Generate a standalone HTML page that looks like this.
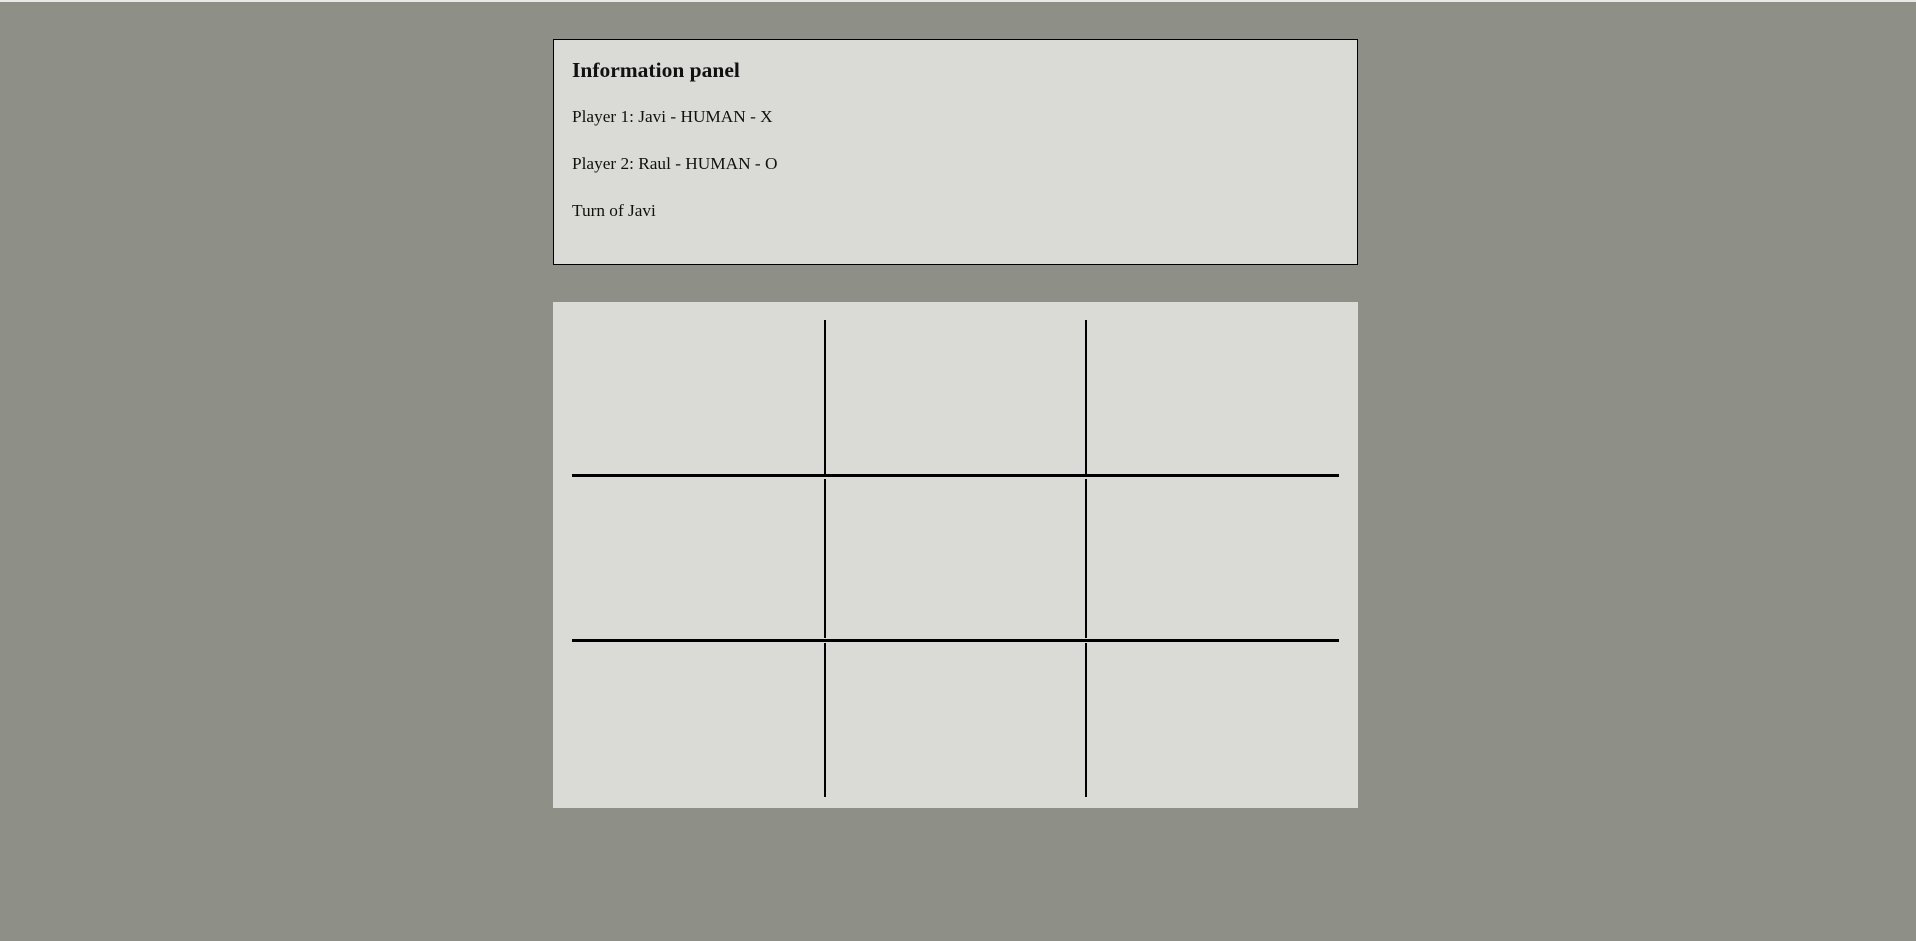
<!DOCTYPE html>
<html><head><style>
body{margin:0;width:1916px;height:941px;background:#8e8f87;position:relative;overflow:hidden;font-family:"Liberation Serif",serif;color:#111;border-top:2px solid #e8e8e6;box-sizing:border-box}
.p{position:absolute;left:553px;top:37px;width:805px;height:226px;box-sizing:border-box;border:1px solid #000;background:#dadad6}
.t{position:absolute;left:572px;white-space:nowrap}
.b{position:absolute;left:553px;top:300px;width:805px;height:506px;background:#dadad6}
.h{position:absolute;left:572px;width:767px;height:3px;background:#000}
.v{position:absolute;width:2px;background:#000}
</style></head><body>
<div class="p"></div>
<div class="t" style="top:56px;font-size:21.5px;font-weight:bold">Information panel</div>
<div class="t" style="top:105px;font-size:17.3px">Player 1: Javi - HUMAN - X</div>
<div class="t" style="top:152px;font-size:17.3px">Player 2: Raul - HUMAN - O</div>
<div class="t" style="top:199px;font-size:17.3px">Turn of Javi</div>
<div class="b"></div>
<div class="h" style="top:472px"></div>
<div class="h" style="top:637px"></div>
<div class="v" style="left:824px;top:318px;height:154px"></div>
<div class="v" style="left:1085px;top:318px;height:154px"></div>
<div class="v" style="left:824px;top:477px;height:159px"></div>
<div class="v" style="left:1085px;top:477px;height:159px"></div>
<div class="v" style="left:824px;top:641px;height:154px"></div>
<div class="v" style="left:1085px;top:641px;height:154px"></div>
</body></html>
